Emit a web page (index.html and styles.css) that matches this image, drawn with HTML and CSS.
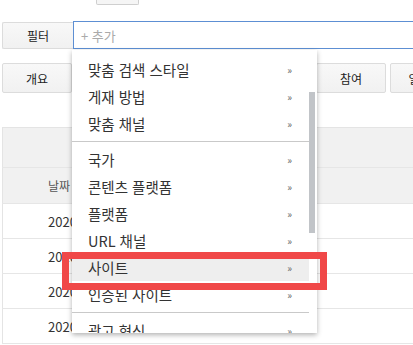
FILE: index.html
```html
<!DOCTYPE html>
<html lang="ko">
<head>
    <meta charset="UTF-8">
    <title>보고서</title>
    <link rel="stylesheet" href="styles.css">
</head>
<body>
    <div class="page">
        <div class="top-bar">
            <span class="top-button"></span>
        </div>

        <div class="filter-row">
            <div class="filter-label">필터</div>
            <div class="filter-input">+ 추가</div>
        </div>

        <div class="tabs">
            <div class="tab tab-short">개요</div>
            <div class="tab"></div>
            <div class="tab"></div>
            <div class="tab"></div>
            <div class="tab tab-short">참여</div>
            <div class="tab tab-short">일치율</div>
        </div>

        <table class="report">
            <tr class="head-top"><th colspan="3"></th></tr>
            <tr class="head">
                <th class="date-col">날짜</th>
                <th></th>
                <th></th>
            </tr>
            <tr><td class="date-col">2020-09-01</td><td></td><td></td></tr>
            <tr><td class="date-col">2020-09-02</td><td></td><td></td></tr>
            <tr><td class="date-col">2020-09-03</td><td></td><td></td></tr>
            <tr><td class="date-col">2020-09-04</td><td></td><td></td></tr>
        </table>

        <!-- 필터 드롭다운 -->
        <div class="dropdown">
            <ul class="menu">
                <li>맞춤 검색 스타일<span class="more">»</span></li>
                <li>게재 방법<span class="more">»</span></li>
                <li>맞춤 채널<span class="more">»</span></li>
                <li class="divider"></li>
                <li>국가<span class="more">»</span></li>
                <li>콘텐츠 플랫폼<span class="more">»</span></li>
                <li>플랫폼<span class="more">»</span></li>
                <li>URL 채널<span class="more">»</span></li>
                <li class="active">사이트<span class="more">»</span></li>
                <li>인증된 사이트<span class="more">»</span></li>
                <li class="divider"></li>
                <li>광고 형식<span class="more">»</span></li>
            </ul>
            <div class="scroll-thumb"></div>
        </div>

        <div class="highlight-box"></div>
    </div>
</body>
</html>
```

FILE: styles.css
```css
* {
    margin: 0;
    padding: 0;
    box-sizing: border-box;
}

body {
    font-family: "Noto Sans CJK KR", "Noto Sans", sans-serif;
    background: white;
    color: #333;
    overflow: hidden;
}

.page {
    position: relative;
    width: 413px;
    height: 345px;
    overflow: hidden;
}

.top-bar {
    height: 5px;
    padding-left: 96px;
}

.top-button {
    display: block;
    width: 43px;
    height: 5px;
    background: #f5f5f5;
    border: 1px solid #cfcfcf;
    border-top: none;
    border-radius: 0 0 2px 2px;
}

.filter-row {
    display: flex;
    align-items: flex-end;
    margin-top: 16px;
    padding-left: 2px;
    height: 28px;
}

.filter-label {
    width: 71px;
    height: 27px;
    display: flex;
    align-items: center;
    justify-content: center;
    font-size: 12px;
    color: #222;
    background: linear-gradient(#f8f8f8, #f1f1f1);
    border: 1px solid #dcdcdc;
    border-right: none;
    border-radius: 2px 0 0 2px;
}

.filter-input {
    flex: 1;
    height: 28px;
    margin-right: -10px;
    padding-left: 7px;
    display: flex;
    align-items: center;
    font-size: 13px;
    color: #aaa;
    border: 1px solid #5d8fd3;
}

.tabs {
    display: flex;
    gap: 4px;
    margin-top: 14px;
    padding-left: 2px;
    height: 30px;
}

.tab {
    flex: none;
    width: 76px;
    display: flex;
    align-items: center;
    justify-content: center;
    font-size: 12px;
    color: #222;
    background: linear-gradient(#f8f8f8, #f1f1f1);
    border: 1px solid #dcdcdc;
    border-radius: 2px;
}

.tab-short {
    width: 70px;
}

.report {
    margin-top: 34px;
    margin-left: 2px;
    width: 430px;
    border-collapse: collapse;
    font-size: 13px;
    border-left: 1px solid #e4e4e4;
}

.report th,
.report td {
    border-bottom: 1px solid #e6e6e6;
    text-align: left;
    white-space: nowrap;
}

.report .head-top th {
    height: 40px;
    background: #f1f1f1;
    border-top: 1px solid #e4e4e4;
}

.report .head th {
    height: 36px;
    background: #f1f1f1;
    font-weight: normal;
    font-size: 12px;
    color: #555;
}

.report td {
    height: 35px;
    color: #333;
}

.report .date-col {
    width: 120px;
    padding-left: 45px;
}

.dropdown {
    position: absolute;
    left: 72px;
    top: 50px;
    width: 245px;
    height: 283px;
    background: white;
    overflow: hidden;
    box-shadow: 0 2px 5px rgba(0, 0, 0, 0.3);
}

.menu {
    list-style: none;
    padding-top: 6px;
    width: 237px;
}

.menu li {
    height: 27px;
    display: flex;
    align-items: center;
    justify-content: space-between;
    padding: 0 17px 0 16px;
    font-size: 14.5px;
    color: #333;
}

.menu li.active {
    background: #eeeeee;
}

.menu li.divider {
    height: 9px;
    padding: 0;
    position: relative;
}

.menu li.divider::after {
    content: '';
    position: absolute;
    left: 0;
    right: 0;
    top: 4px;
    height: 1px;
    background: #c9c9c9;
}

.more {
    font-size: 10px;
    color: #666;
}

.scroll-thumb {
    position: absolute;
    left: 237px;
    top: 42px;
    width: 6px;
    height: 141px;
    background: #c1c4c8;
}

.highlight-box {
    position: absolute;
    left: 62px;
    top: 252px;
    width: 265px;
    height: 38px;
    border: 7px solid #f04848;
}
```
